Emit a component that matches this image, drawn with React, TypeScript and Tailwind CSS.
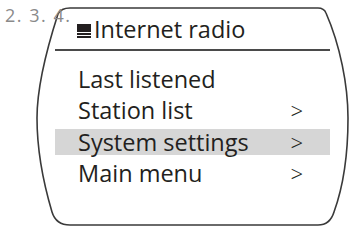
const items = [
  { label: "Last listened", arrow: false },
  { label: "Station list", arrow: true },
  { label: "System settings", arrow: true, active: true },
  { label: "Main menu", arrow: true },
]

function Outline() {
  return (
    <svg className="absolute inset-0" width="351" height="229" viewBox="0 0 351 229" fill="none">
      <path
        d="M70 8 L318 8 Q324 8 326 13 C340 45 348 85 348 118 C348 160 342 190 334 212 Q330 225 318 225 L70 225 Q56 225 52 212 C44 185 37 150 37 118 C37 85 48 45 58 14 Q61 8 70 8 Z"
        stroke="#3a3a3a"
        strokeWidth="1.6"
      />
    </svg>
  )
}

function RadioIcon() {
  return (
    <div className="flex flex-col w-[14px] mb-[3px]">
      <div className="h-[8px] bg-[#231f20]" />
      <div className="h-[2px] mt-[1px] bg-[#231f20]" />
      <div className="h-[2px] mt-[1px] bg-[#231f20]" />
    </div>
  )
}

export default function App() {
  return (
    <div className="relative w-[351px] h-[229px] bg-white overflow-hidden font-['Open_Sans',sans-serif] text-[#231f20]">
      <Outline />
      <span className="absolute left-[5px] top-[3px] text-[18px] leading-[24px] text-[#8a8a8a] tracking-[1.5px]">
        2. 3. 4.
      </span>

      <div className="relative flex flex-col pt-[17px]">
        <div className="flex items-end gap-[3px] ml-[77px] h-[24px]">
          <RadioIcon />
          <span className="text-[23.5px] leading-[24px]">Internet radio</span>
        </div>
        <div className="ml-[55px] w-[275px] h-[2px] mt-[8px] bg-[#4a4a4a]" />

        <div className="flex flex-col gap-[5.3px] mt-[15px]">
          {items.map((it) => (
            <div
              key={it.label}
              className={
                "flex justify-between ml-[55px] w-[275px] h-[26px] pl-[23px] pr-[27px] text-[23.5px] leading-[26px] " +
                (it.active ? "bg-[#d6d6d6]" : "")
              }
            >
              <span>{it.label}</span>
              {it.arrow && <span className="font-light text-[22px]">&gt;</span>}
            </div>
          ))}
        </div>
      </div>
    </div>
  )
}
